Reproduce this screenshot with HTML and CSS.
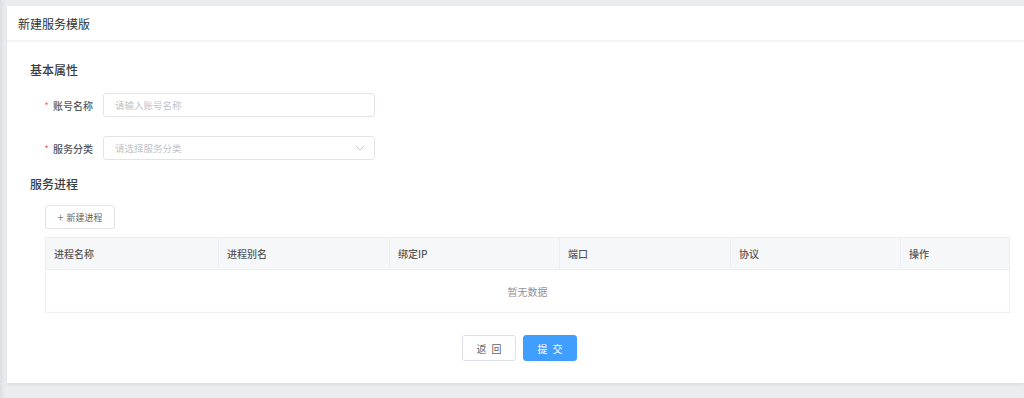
FILE: index.html
```html
<!DOCTYPE html>
<html lang="zh-CN">
<head>
<meta charset="utf-8">
<title>新建服务模版</title>
<link rel="stylesheet" href="styles.css">
</head>
<body>
<div class="page">
  <div class="card">
    <div class="card-header">新建服务模版</div>
    <div class="card-body">
      <div class="section-title">基本属性</div>
      <div class="form-item">
        <label class="form-label"><span class="star">*</span>账号名称</label>
        <div class="input"><span class="placeholder">请输入账号名称</span></div>
      </div>
      <div class="form-item">
        <label class="form-label"><span class="star">*</span>服务分类</label>
        <div class="input select">
          <span class="placeholder">请选择服务分类</span>
          <svg class="arrow" width="10" height="6" viewBox="0 0 10 6"><path d="M1 1 L5 5 L9 1" fill="none" stroke="#c0c4cc" stroke-width="1"/></svg>
        </div>
      </div>
      <div class="section-title second">服务进程</div>
      <div class="process">
        <button class="btn-add"><span class="plus">+</span>新建进程</button>
        <div class="table">
          <div class="thead">
            <div class="th">进程名称</div>
            <div class="th">进程别名</div>
            <div class="th">绑定IP</div>
            <div class="th">端口</div>
            <div class="th">协议</div>
            <div class="th last">操作</div>
          </div>
          <div class="tbody">暂无数据</div>
        </div>
      </div>
      <div class="actions">
        <button class="btn btn-default">返 回</button>
        <button class="btn btn-primary">提 交</button>
      </div>
    </div>
  </div>
</div>
</body>
</html>
```
FILE: styles.css
```css
* { box-sizing: border-box; }
html, body {
  margin: 0;
  padding: 0;
}
body {
  width: 1024px;
  height: 398px;
  overflow: hidden;
  background: linear-gradient(to right, #dcdde2 0px, #e6e7eb 3px, #ebecf0 6px, #ebecf0 100%);
  font-family: "Noto Sans CJK SC", "Noto Sans", sans-serif;
  color: #303133;
}
.page {
  padding: 6px 0 0 7px;
}
.card {
  width: 1017px;
  height: 377px;
  background: #fff;
  box-shadow: 0 2px 3px rgba(0, 0, 0, 0.06);
}
.card-header {
  height: 36px;
  padding-left: 11px;
  display: flex;
  align-items: center;
  font-size: 12px;
  color: #303133;
  border-bottom: 2px solid #f3f4f7;
}
.card-body {
  padding: 18px 0 0 23px;
}
.section-title {
  font-size: 12px;
  line-height: 20px;
  font-weight: 500;
  color: #3a3c40;
  margin-bottom: 13px;
}
.section-title.second {
  margin-top: -5px;
  margin-bottom: 11px;
}
.form-item {
  display: flex;
  align-items: center;
  margin-bottom: 19px;
}
.form-label {
  width: 73px;
  padding-right: 10px;
  text-align: right;
  font-size: 10px;
  font-weight: 500;
  color: #55575c;
}
.star {
  color: #f56c6c;
  margin-right: 4px;
  font-weight: 400;
}
.input {
  width: 272px;
  height: 24px;
  border: 1px solid #e2e4ea;
  border-radius: 3px;
  display: flex;
  align-items: center;
  padding-left: 11px;
  padding-right: 8px;
}
.placeholder {
  font-size: 9.5px;
  color: #c0c4cc;
}
.select {
  justify-content: space-between;
}
.arrow {
  display: block;
  margin-right: 1px;
}
.process {
  padding-left: 15px;
}
.btn-add {
  width: 70px;
  height: 24px;
  border: 1px solid #e2e4ea;
  border-radius: 3px;
  background: #fff;
  font-family: inherit;
  font-size: 9px;
  color: #606266;
  display: flex;
  align-items: center;
  justify-content: center;
  padding: 0;
  margin-bottom: 8px;
}
.plus {
  font-size: 11px;
  line-height: 1;
  margin-right: 3px;
  color: #808388;
}
.table {
  width: 965px;
  border: 1px solid #ebeef5;
}
.thead {
  display: grid;
  grid-template-columns: 173px 171px 170px 171px 170px 1fr;
  height: 32px;
  background: #f6f7f9;
  border-bottom: 1px solid #ebeef5;
}
.th {
  display: flex;
  align-items: center;
  padding-left: 8px;
  font-size: 10px;
  font-weight: 500;
  color: #55575c;
  border-right: 1px solid #ebeef5;
}
.th.last {
  border-right: none;
}
.tbody {
  height: 42px;
  display: flex;
  align-items: center;
  justify-content: center;
  font-size: 10px;
  color: #909399;
}
.actions {
  display: flex;
  justify-content: center;
  gap: 7px;
  margin-top: 22px;
  width: 979px;
}
.btn {
  width: 54px;
  height: 26px;
  border-radius: 3px;
  font-family: inherit;
  font-size: 10px;
  letter-spacing: 1.5px;
  padding: 0 0 0 1.5px;
  cursor: pointer;
}
.btn-default {
  background: #fff;
  border: 1px solid #dcdfe6;
  color: #606266;
}
.btn-primary {
  background: #409eff;
  border: 1px solid #409eff;
  color: #fff;
}
```
